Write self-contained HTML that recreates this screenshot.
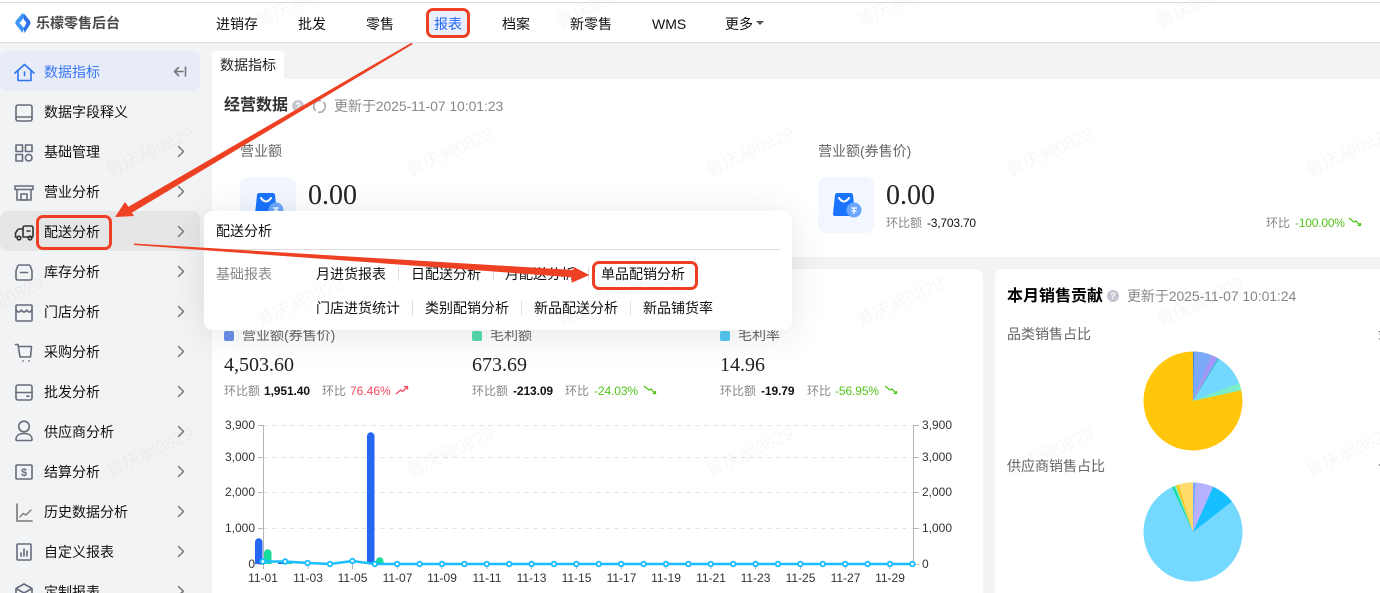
<!DOCTYPE html>
<html lang="zh">
<head>
<meta charset="utf-8">
<title>乐檬零售后台</title>
<style>
html,body{margin:0;padding:0;width:1380px;height:593px;overflow:hidden;background:#f2f3f5}
body{font-family:"Liberation Sans","Noto Sans CJK SC",sans-serif;font-size:14px;color:#111}
#r{position:absolute;left:0;top:0;width:1380px;height:593px;overflow:hidden;contain:paint}
.b{position:absolute}
.t{position:absolute;white-space:nowrap;line-height:20px;height:20px}
.g{color:#666}
.h{color:#888}
.s{font-size:12px}
.n{font-family:"Liberation Serif","Noto Serif CJK SC",serif;color:#222}
.k{color:#111}
.gr{color:#52c41a}
.wm{position:absolute;width:110px;height:24px;line-height:24px;margin:-12px 0 0 -55px;text-align:center;font-size:18px;color:rgba(0,0,0,.032);transform:rotate(-25deg);white-space:nowrap;z-index:40}
.box{position:absolute;border:3px solid #ee3f24;border-radius:7px;box-sizing:border-box;z-index:50}
.d{position:absolute;width:1px;height:14px;background:#ddd}
</style>
</head>
<body>
<div id="r">
<!-- header -->
<div class="b" style="left:0;top:0;width:1380px;height:43px;background:#fff;border-bottom:1px solid #dcdde0;box-sizing:border-box"></div>
<div class="b" style="left:0;top:2px;width:1380px;height:1px;background:#dcdde0"></div>
<svg class="b" style="left:15px;top:13px" width="16" height="20" viewBox="0 0 16 20">
<path d="M7.500 0 L0.800 8 Q-0.200 10 0.800 11.500 L7.500 20 L9 15 L4.500 10 L8 5.800 L9.500 2 Z" fill="#3f97f5"/>
<path d="M9 0.500 L15 8 Q16 10 15 11.500 L9.500 20 L8.500 15.500 L11.500 10 L8.500 6 Z" fill="#2a72ea"/>
</svg>
<div class="t" style="left:36px;top:13px;font-weight:700;color:#4a4a4a">乐檬零售后台</div>
<div class="t" style="left:216px;top:14px">进销存</div>
<div class="t" style="left:298px;top:14px">批发</div>
<div class="t" style="left:366px;top:14px">零售</div>
<div class="b" style="left:428px;top:10px;width:40px;height:26px;background:#e8eefc"></div>
<div class="t" style="left:434px;top:14px;color:#2468f2">报表</div>
<div class="t" style="left:502px;top:14px">档案</div>
<div class="t" style="left:570px;top:14px">新零售</div>
<div class="t" style="left:652px;top:14px">WMS</div>
<div class="t" style="left:725px;top:14px">更多</div>
<div class="b" style="left:756px;top:21px;width:0;height:0;border:4px solid transparent;border-top:4.500px solid #555;border-bottom:0"></div>

<!-- sidebar -->
<div class="b" style="left:0;top:51px;width:200px;height:40px;background:#e7ecf8;border-radius:8px"></div>
<div class="b" style="left:0;top:211px;width:200px;height:40px;background:#e6e6e6;border-radius:8px"></div>
<div class="t" style="left:44px;top:62px;color:#3a78f2">数据指标</div>
<div class="t" style="left:44px;top:102px">数据字段释义</div>
<div class="t" style="left:44px;top:142px">基础管理</div>
<div class="t" style="left:44px;top:182px">营业分析</div>
<div class="t" style="left:44px;top:222px">配送分析</div>
<div class="t" style="left:44px;top:262px">库存分析</div>
<div class="t" style="left:44px;top:302px">门店分析</div>
<div class="t" style="left:44px;top:342px">采购分析</div>
<div class="t" style="left:44px;top:382px">批发分析</div>
<div class="t" style="left:44px;top:422px">供应商分析</div>
<div class="t" style="left:44px;top:462px">结算分析</div>
<div class="t" style="left:44px;top:502px">历史数据分析</div>
<div class="t" style="left:44px;top:542px">自定义报表</div>
<div class="t" style="left:44px;top:573px;height:20px;overflow:hidden;line-height:38px">定制报表</div>

<svg class="b" style="left:0;top:0;z-index:2" width="212" height="593" viewBox="0 0 212 593" fill="none" stroke="#676c7c" stroke-width="1.600" stroke-linecap="round" stroke-linejoin="round">
<g stroke="#2f74f0"><path d="M15 73 L24.500 64.500 L34 73"/><path d="M18 70.500 V80.500 H31 V70.500"/><path d="M24.500 72 V75.500"/></g>
<path d="M174.500 71.500 H183 M178.500 67.500 L174.500 71.500 L178.500 75.500 M185.500 67 V76" stroke="#777"/>
<rect x="16" y="105" width="16" height="16" rx="2"/><path d="M16 117 H32"/>
<rect x="16" y="145" width="6.500" height="6.500"/><rect x="25.500" y="145" width="6.500" height="6.500"/><rect x="16" y="154.500" width="6.500" height="6.500"/><circle cx="28.700" cy="157.700" r="3.300"/>
<rect x="15" y="186" width="18" height="3.500"/><path d="M17 189.500 V200 H31 V189.500"/><rect x="21" y="194" width="6" height="6"/>
<g stroke="#333"><path d="M23 236 V228 Q23 226 25 226 H31 Q33 226 33 228 V236 Q33 237 32 237 H23"/><path d="M23 229 H19 Q18 229 17.500 230 L15.500 233 V237 H17"/><path d="M27 231 H30"/><circle cx="19" cy="238" r="1.800"/><circle cx="30" cy="238" r="1.800"/></g>
<path d="M19.500 265 H28.500 Q30 265 30.500 266.500 L32 271 V278 Q32 280 30 280 H18 Q16 280 16 278 V271 L17.500 266.500 Q18 265 19.500 265 Z"/><path d="M20.500 272.500 H27.500"/>
<rect x="16" y="305" width="16" height="16" rx="1"/><path d="M16 310 Q18.700 314 21.300 310 Q24 314 26.700 310 Q29.300 314 32 310"/>
<path d="M15.500 344.500 H18 L20 357 H30.500 L31.500 346.500 H19"/><path d="M23 360.800 V361 M29 360.800 V361"/>
<rect x="16" y="385" width="16" height="15" rx="2"/><path d="M16 392.500 H32 M27 396.200 H29"/>
<circle cx="24" cy="426.500" r="5.300"/><path d="M16 439.500 C16 435 20 433.500 24 433.500 C28 433.500 32 435 32 439.500 Q32 440.500 31 440.500 H17 Q16 440.500 16 439.500 Z"/>
<rect x="16" y="465" width="16" height="14" rx="1"/>
<path d="M17 504 V521 H32" stroke="#777"/><path d="M20 517 L23 513.500 L26 515 L31 510" stroke="#777" stroke-width="1.300"/>
<rect x="17" y="544" width="14" height="16" rx="1"/><path d="M21 556 V553 M24 556 V549 M27 556 V551"/>
<path d="M24 584 L32 588.500 V593 M16 593 V588.500 L24 584 M16 588.500 L24 593 L32 588.500"/>
<g stroke="#777" stroke-width="1.500"><path d="M178.500 146.500 L183.500 151.500 L178.500 156.500"/><path d="M178.500 186.500 L183.500 191.500 L178.500 196.500"/><path d="M178.500 226.500 L183.500 231.500 L178.500 236.500"/><path d="M178.500 266.500 L183.500 271.500 L178.500 276.500"/><path d="M178.500 306.500 L183.500 311.500 L178.500 316.500"/><path d="M178.500 346.500 L183.500 351.500 L178.500 356.500"/><path d="M178.500 386.500 L183.500 391.500 L178.500 396.500"/><path d="M178.500 426.500 L183.500 431.500 L178.500 436.500"/><path d="M178.500 466.500 L183.500 471.500 L178.500 476.500"/><path d="M178.500 506.500 L183.500 511.500 L178.500 516.500"/><path d="M178.500 546.500 L183.500 551.500 L178.500 556.500"/><path d="M178.500 586.500 L183.500 591.500 L181 593"/></g>
<text x="24" y="476" font-family="Liberation Sans" font-size="11" font-weight="700" fill="#676c7c" stroke="none" text-anchor="middle">$</text>
</svg>

<!-- main -->
<div class="b" style="left:212px;top:51px;width:72px;height:29px;background:#fff;border-radius:4px 4px 0 0"></div>
<div class="t" style="left:220px;top:55px;font-size:14px;color:#222">数据指标</div>
<div class="b" style="left:212px;top:79px;width:1168px;height:178px;background:#fff"></div>
<div class="b" style="left:212px;top:269px;width:771px;height:324px;background:#fff;border-radius:8px 8px 0 0"></div>
<div class="b" style="left:995px;top:269px;width:385px;height:324px;background:#fff;border-radius:8px 0 0 0"></div>

<div class="t" style="left:224px;top:96px;font-size:16px;font-weight:700;color:#333">经营数据</div>
<div class="b" style="left:292px;top:100px;width:12px;height:12px;border-radius:50%;background:#c4c6d0;color:#fff;font-size:9px;line-height:12px;text-align:center;font-weight:700">?</div>
<svg class="b" style="left:312px;top:99px" width="15" height="15" viewBox="0 0 15 15" fill="none" stroke="#b0b0b0" stroke-width="1.700"><circle cx="7.500" cy="7.500" r="5.800" stroke-dasharray="15.500 2.700" transform="rotate(-50 7.500 7.500)"/></svg>
<div class="t h" style="left:334px;top:96px;letter-spacing:-.08px">更新于2025-11-07 10:01:23</div>

<div class="t g" style="left:240px;top:141px">营业额</div>
<div class="t g" style="left:818px;top:141px">营业额(券售价)</div>
<div class="b" style="left:240px;top:177px;width:56px;height:56px;border-radius:8px;background:#f1f6ff"></div>
<div class="b" style="left:818px;top:177px;width:56px;height:56px;border-radius:8px;background:#f1f6ff"></div>
<svg class="b" style="left:240px;top:177px" width="56" height="56" viewBox="0 0 56 56"><path d="M19 16 H33 Q34.500 16 35 18 L37 37 Q37 39 35 39 H17 Q15 39 15 37 L17 18 Q17.500 16 19 16 Z" fill="#1a74ff"/><path d="M21 21 Q26 28 31 21" fill="none" stroke="#fff" stroke-width="2" stroke-linecap="round"/><circle cx="36" cy="33" r="7.500" fill="#6aa8ff"/><path d="M33 31 H39 M36 31 V37 M33.500 34 H38.500" stroke="#fff" stroke-width="1.300" fill="none"/></svg>
<svg class="b" style="left:818px;top:177px" width="56" height="56" viewBox="0 0 56 56"><path d="M19 16 H33 Q34.500 16 35 18 L37 37 Q37 39 35 39 H17 Q15 39 15 37 L17 18 Q17.500 16 19 16 Z" fill="#1a74ff"/><path d="M21 21 Q26 28 31 21" fill="none" stroke="#fff" stroke-width="2" stroke-linecap="round"/><circle cx="36" cy="33" r="7.500" fill="#6aa8ff"/><path d="M33 31 H39 M36 31 V37 M33.500 34 H38.500" stroke="#fff" stroke-width="1.300" fill="none"/></svg>
<div class="t n" style="left:308px;top:186px;font-size:28px">0.00</div>
<div class="t n" style="left:886px;top:186px;font-size:28px">0.00</div>
<div class="t s h" style="left:886px;top:213px">环比额</div>
<div class="t s k" style="left:927px;top:213px;letter-spacing:-.2px">-3,703.70</div>
<div class="t s h" style="left:1266px;top:213px">环比</div>
<div class="t s gr" style="left:1295px;top:213px;letter-spacing:-.2px">-100.00%</div>
<svg class="b" style="left:1348px;top:216px" width="14" height="12" viewBox="0 0 14 12" fill="none" stroke="#52c41a" stroke-width="1.300"><path d="M1 2 L6 6 L8 5 L12 9 M9.500 9.500 H12.500 V7"/></svg>

<!-- metric row -->
<div class="b" style="left:224px;top:331px;width:10px;height:10px;border-radius:2px;background:#6a90ea"></div>
<div class="t g" style="left:242px;top:325px">营业额(券售价)</div>
<div class="t n" style="left:224px;top:355px;font-size:20px">4,503.60</div>
<div class="t s h" style="left:224px;top:381px">环比额</div>
<div class="t s k" style="left:264px;top:381px;font-weight:700;letter-spacing:-.1px">1,951.40</div>
<div class="t s h" style="left:322px;top:381px">环比</div>
<div class="t s" style="left:350px;top:381px;color:#f5475e">76.46%</div>
<svg class="b" style="left:395px;top:384px" width="14" height="12" viewBox="0 0 14 12" fill="none" stroke="#f5475e" stroke-width="1.300"><path d="M1 10 L5.500 6 L7.500 7.500 L12 3 M9 2.500 H12.500 V5.500"/></svg>

<div class="b" style="left:472px;top:331px;width:10px;height:10px;border-radius:2px;background:#58dcb0"></div>
<div class="t g" style="left:490px;top:325px">毛利额</div>
<div class="t n" style="left:472px;top:355px;font-size:20px">673.69</div>
<div class="t s h" style="left:472px;top:381px">环比额</div>
<div class="t s k" style="left:513px;top:381px;font-weight:700;letter-spacing:-.1px">-213.09</div>
<div class="t s h" style="left:565px;top:381px">环比</div>
<div class="t s gr" style="left:594px;top:381px;letter-spacing:-.1px">-24.03%</div>
<svg class="b" style="left:643px;top:384px" width="14" height="12" viewBox="0 0 14 12" fill="none" stroke="#52c41a" stroke-width="1.300"><path d="M1 2 L6 6 L8 5 L12 9 M9.500 9.500 H12.500 V7"/></svg>

<div class="b" style="left:720px;top:331px;width:10px;height:10px;border-radius:2px;background:#55c8f2"></div>
<div class="t g" style="left:738px;top:325px">毛利率</div>
<div class="t n" style="left:720px;top:355px;font-size:20px">14.96</div>
<div class="t s h" style="left:720px;top:381px">环比额</div>
<div class="t s k" style="left:761px;top:381px;font-weight:700;letter-spacing:-.1px">-19.79</div>
<div class="t s h" style="left:807px;top:381px">环比</div>
<div class="t s gr" style="left:835px;top:381px;letter-spacing:-.1px">-56.95%</div>
<svg class="b" style="left:884px;top:384px" width="14" height="12" viewBox="0 0 14 12" fill="none" stroke="#52c41a" stroke-width="1.300"><path d="M1 2 L6 6 L8 5 L12 9 M9.500 9.500 H12.500 V7"/></svg>

<!-- chart -->
<svg class="b" style="left:0;top:0;z-index:1" width="983" height="593" viewBox="0 0 983 593" font-family="Liberation Sans" font-size="12" fill="#333">
<g stroke="#e4e4e4" stroke-dasharray="5 4" stroke-width="1"><path d="M263 425.500 H914"/><path d="M263 457.500 H914"/><path d="M263 492.500 H914"/><path d="M263 528.500 H914"/></g>
<g stroke="#b5b5b5" fill="none"><path d="M263.500 425 V569"/><path d="M913.500 425 V564"/><path d="M258 425.500 H263 M258 457.500 H263 M258 492.500 H263 M258 528.500 H263 M258 564.500 H263"/><path d="M914 425.500 H919 M914 457.500 H919 M914 492.500 H919 M914 528.500 H919 M914 564.500 H919"/>
<path d="M308 564 V569 M352.500 564 V569 M397.500 564 V569 M442 564 V569 M487 564 V569 M531.500 564 V569 M576.500 564 V569 M621.500 564 V569 M666 564 V569 M711 564 V569 M755.500 564 V569 M800.500 564 V569 M845.500 564 V569 M890 564 V569"/></g>
<text x="255" y="429" text-anchor="end">3,900</text><text x="255" y="461" text-anchor="end">3,000</text><text x="255" y="496" text-anchor="end">2,000</text><text x="255" y="532" text-anchor="end">1,000</text><text x="255" y="568" text-anchor="end">0</text>
<text x="922" y="429">3,900</text><text x="922" y="461">3,000</text><text x="922" y="496">2,000</text><text x="922" y="532">1,000</text><text x="922" y="568">0</text>
<g text-anchor="middle"><text x="263" y="582">11-01</text><text x="308" y="582">11-03</text><text x="352.500" y="582">11-05</text><text x="397.500" y="582">11-07</text><text x="442" y="582">11-09</text><text x="487" y="582">11-11</text><text x="531.500" y="582">11-13</text><text x="576.500" y="582">11-15</text><text x="621.500" y="582">11-17</text><text x="666" y="582">11-19</text><text x="711" y="582">11-21</text><text x="755.500" y="582">11-23</text><text x="800.500" y="582">11-25</text><text x="845.500" y="582">11-27</text><text x="890" y="582">11-29</text></g>
<path d="M255 564 V542 A3.500 3.500 0 0 1 262.500 542 V564 Z" fill="#2468f2"/>
<path d="M264 564 V553 A3.500 3.500 0 0 1 271.500 553 V564 Z" fill="#14dc9c"/>
<path d="M367 564 V436 A3.500 3.500 0 0 1 374.500 436 V564 Z" fill="#2468f2"/>
<path d="M376 564 V561 A3.500 3.500 0 0 1 383.500 561 V564 Z" fill="#14dc9c"/>
<path d="M278 562.500 H284 V564 H278 Z" fill="#2468f2"/>
<path d="M286 562.500 H292 V564 H286 Z" fill="#14dc9c"/>
<polyline fill="none" stroke="#1cbdff" stroke-width="2.400" points="262.800,561.500 285.200,561.500 307.600,563 330,564 352.400,561 374.800,564 397.200,564 912.400,564"/>
<g fill="#fff" stroke="#1cbdff" stroke-width="1.900">
<circle cx="262.800" cy="561.500" r="2.300"/><circle cx="285.200" cy="561.500" r="2.300"/><circle cx="307.600" cy="563" r="2.300"/><circle cx="330" cy="564" r="2.300"/><circle cx="352.400" cy="561" r="2.300"/><circle cx="374.800" cy="564" r="2.300"/><circle cx="397.200" cy="564" r="2.300"/><circle cx="419.600" cy="564" r="2.300"/><circle cx="442" cy="564" r="2.300"/><circle cx="464.400" cy="564" r="2.300"/><circle cx="486.800" cy="564" r="2.300"/><circle cx="509.200" cy="564" r="2.300"/><circle cx="531.600" cy="564" r="2.300"/><circle cx="554" cy="564" r="2.300"/><circle cx="576.400" cy="564" r="2.300"/><circle cx="598.800" cy="564" r="2.300"/><circle cx="621.200" cy="564" r="2.300"/><circle cx="643.600" cy="564" r="2.300"/><circle cx="666" cy="564" r="2.300"/><circle cx="688.400" cy="564" r="2.300"/><circle cx="710.800" cy="564" r="2.300"/><circle cx="733.200" cy="564" r="2.300"/><circle cx="755.600" cy="564" r="2.300"/><circle cx="778" cy="564" r="2.300"/><circle cx="800.400" cy="564" r="2.300"/><circle cx="822.800" cy="564" r="2.300"/><circle cx="845.200" cy="564" r="2.300"/><circle cx="867.600" cy="564" r="2.300"/><circle cx="890" cy="564" r="2.300"/><circle cx="912.400" cy="564" r="2.300"/>
</g>
</svg>

<!-- right card -->
<div class="t" style="left:1007px;top:287px;font-size:16px;font-weight:700;color:#000">本月销售贡献</div>
<div class="b" style="left:1107px;top:290px;width:12px;height:12px;border-radius:50%;background:#c4c6d0;color:#fff;font-size:9px;line-height:12px;text-align:center;font-weight:700">?</div>
<div class="t h" style="left:1127px;top:286px;letter-spacing:-.08px">更新于2025-11-07 10:01:24</div>
<div class="t g" style="left:1007px;top:324px">品类销售占比</div>
<div class="t g" style="left:1007px;top:456px">供应商销售占比</div>
<div class="t g" style="left:1378px;top:324px;width:2px;overflow:hidden">金</div>
<div class="t g" style="left:1378px;top:456px;width:2px;overflow:hidden">十</div>
<svg class="b" style="left:1130px;top:340px" width="130" height="253" viewBox="1130 340 130 253">
<circle cx="1193" cy="401" r="49.500" fill="#ffc60a"/>
<path d="M1193 401 L1193 351.500 A49.500 49.500 0 0 1 1211.540 355.100 Z" fill="#7aa8fb"/>
<path d="M1193 401 L1193 351.500 L1193.500 351.500 Z" fill="#1f4fa8"/>
<path d="M1193 401 L1211.540 355.100 A49.500 49.500 0 0 1 1217.530 358 Z" fill="#a495fb"/>
<path d="M1193 401 L1217.530 358 A49.500 49.500 0 0 1 1219.230 359.020 Z" fill="#36bff0"/>
<path d="M1193 401 L1219.230 359.020 A49.500 49.500 0 0 1 1239.210 383.260 Z" fill="#72d8ff"/>
<path d="M1193 401 L1239.210 383.260 A49.500 49.500 0 0 1 1241.310 390.200 Z" fill="#7aeec8"/>
<circle cx="1193" cy="532" r="49.500" fill="#74d8ff"/>
<path d="M1193 532 L1193 482.500 A49.500 49.500 0 0 1 1195.590 482.570 Z" fill="#7aa8fb"/>
<path d="M1193 532 L1195.590 482.570 A49.500 49.500 0 0 1 1213.130 486.780 Z" fill="#b5b1ff"/>
<path d="M1193 532 L1213.130 486.780 A49.500 49.500 0 0 1 1232 501.520 Z" fill="#17bfff"/>
<path d="M1193 532 L1172.080 487.140 A49.500 49.500 0 0 1 1174.460 486.100 Z" fill="#14dc9c"/>
<path d="M1193 532 L1174.460 486.100 A49.500 49.500 0 0 1 1176.070 485.490 Z" fill="#8af0cc"/>
<path d="M1193 532 L1176.070 485.490 A49.500 49.500 0 0 1 1178.530 484.660 Z" fill="#ffc60a"/>
<path d="M1193 532 L1178.530 484.660 A49.500 49.500 0 0 1 1193 482.500 Z" fill="#ffdb6b"/>
</svg>

<!-- popover -->
<div class="b" style="left:204px;top:211px;width:588px;height:119px;background:#fff;border-radius:8px;box-shadow:0 4px 36px rgba(0,0,0,.1);z-index:10"></div>
<div style="position:absolute;left:0;top:0;z-index:11">
<div class="t" style="left:216px;top:221px">配送分析</div>
<div class="b" style="left:216px;top:249px;width:564px;height:1px;background:#dcdcdc"></div>
<div class="t h" style="left:216px;top:264px">基础报表</div>
<div class="t" style="left:316px;top:264px">月进货报表</div><div class="d" style="left:398px;top:267px"></div>
<div class="t" style="left:411px;top:264px">日配送分析</div><div class="d" style="left:493px;top:267px"></div>
<div class="t" style="left:505px;top:264px">月配送分析</div><div class="d" style="left:588px;top:267px"></div>
<div class="t" style="left:601px;top:264px">单品配销分析</div>
<div class="t" style="left:316px;top:298px">门店进货统计</div><div class="d" style="left:412px;top:301px"></div>
<div class="t" style="left:425px;top:298px">类别配销分析</div><div class="d" style="left:521px;top:301px"></div>
<div class="t" style="left:534px;top:298px">新品配送分析</div><div class="d" style="left:630px;top:301px"></div>
<div class="t" style="left:643px;top:298px">新品铺货率</div>
</div>

<!-- watermark -->
<div class="wm" style="left:300px;top:2px">曾庆昶0829</div><div class="wm" style="left:600px;top:2px">曾庆昶0829</div><div class="wm" style="left:900px;top:2px">曾庆昶0829</div><div class="wm" style="left:1200px;top:2px">曾庆昶0829</div>
<div class="wm" style="left:150px;top:152px">曾庆昶0829</div><div class="wm" style="left:450px;top:152px">曾庆昶0829</div><div class="wm" style="left:750px;top:152px">曾庆昶0829</div><div class="wm" style="left:1050px;top:152px">曾庆昶0829</div><div class="wm" style="left:1350px;top:152px">曾庆昶0829</div>
<div class="wm" style="left:0;top:302px">曾庆昶0829</div><div class="wm" style="left:300px;top:302px">曾庆昶0829</div><div class="wm" style="left:600px;top:302px">曾庆昶0829</div><div class="wm" style="left:900px;top:302px">曾庆昶0829</div><div class="wm" style="left:1200px;top:302px">曾庆昶0829</div>
<div class="wm" style="left:150px;top:452px">曾庆昶0829</div><div class="wm" style="left:450px;top:452px">曾庆昶0829</div><div class="wm" style="left:750px;top:452px">曾庆昶0829</div><div class="wm" style="left:1050px;top:452px">曾庆昶0829</div><div class="wm" style="left:1350px;top:452px">曾庆昶0829</div>

<!-- annotations -->
<div class="box" style="left:426px;top:8px;width:44px;height:30px"></div>
<div class="box" style="left:36px;top:215px;width:76px;height:35px"></div>
<div class="box" style="left:592px;top:261px;width:106px;height:29px"></div>
<svg class="b" style="left:0;top:0;z-index:51" width="1380" height="593" viewBox="0 0 1380 593">
<polygon fill="#ee4023" points="411,43 413,44 131.700,212.700 134,216 115,217 125,202 128.500,206.700"/>
<polygon fill="#ee4023" points="134,243.500 134,245 571.700,277.300 571.700,282.700 589.300,275 573.300,266.700 573.300,270"/>
</svg>
</div>
</body>
</html>
